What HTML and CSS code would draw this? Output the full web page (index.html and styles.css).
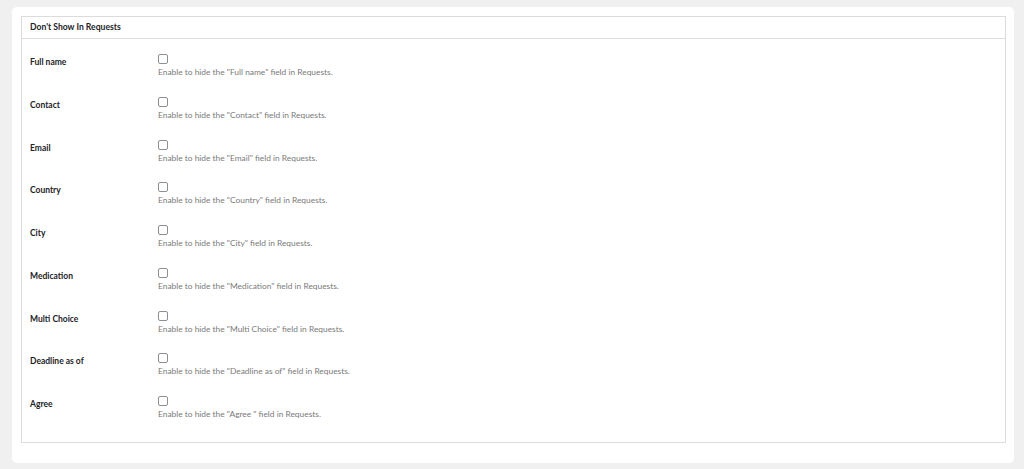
FILE: index.html
```html
<!DOCTYPE html>
<html lang="en">
<head>
  <meta charset="UTF-8" />
  <title>Don't Show In Requests</title>
  <link rel="stylesheet" href="styles.css">
</head>
<body>
  <div class="card">
    <div class="box">
      <div class="box-head">Don't Show In Requests</div>
      <div class="box-body">
        <div class="row">
          <div class="label">Full name</div>
          <div class="field"><span class="check"></span><p class="desc">Enable to hide the "Full name" field in Requests.</p></div>
        </div>
        <div class="row">
          <div class="label">Contact</div>
          <div class="field"><span class="check"></span><p class="desc">Enable to hide the "Contact" field in Requests.</p></div>
        </div>
        <div class="row">
          <div class="label">Email</div>
          <div class="field"><span class="check"></span><p class="desc">Enable to hide the "Email" field in Requests.</p></div>
        </div>
        <div class="row">
          <div class="label">Country</div>
          <div class="field"><span class="check"></span><p class="desc">Enable to hide the "Country" field in Requests.</p></div>
        </div>
        <div class="row">
          <div class="label">City</div>
          <div class="field"><span class="check"></span><p class="desc">Enable to hide the "City" field in Requests.</p></div>
        </div>
        <div class="row">
          <div class="label">Medication</div>
          <div class="field"><span class="check"></span><p class="desc">Enable to hide the "Medication" field in Requests.</p></div>
        </div>
        <div class="row">
          <div class="label">Multi Choice</div>
          <div class="field"><span class="check"></span><p class="desc">Enable to hide the "Multi Choice" field in Requests.</p></div>
        </div>
        <div class="row">
          <div class="label">Deadline as of</div>
          <div class="field"><span class="check"></span><p class="desc">Enable to hide the "Deadline as of" field in Requests.</p></div>
        </div>
        <div class="row">
          <div class="label">Agree</div>
          <div class="field"><span class="check"></span><p class="desc">Enable to hide the "Agree " field in Requests.</p></div>
        </div>
      </div>
    </div>
  </div>
</body>
</html>
```

FILE: styles.css
```css
body {
  margin: 0;
  padding: 7px 10px 6px 12px;
  background: #f0f0f1;
  font-family: Lato, "Open Sans", sans-serif;
  color: #1d2327;
}
.card {
  background: #fff;
  border-radius: 5px;
  padding: 9px 8px 20px 9px;
}
.box {
  border: 1px solid #dcdcde;
}
.box-head {
  height: 21px;
  line-height: 21px;
  padding: 0 8px;
  font-size: 8.6px;
  font-weight: 700;
  border-bottom: 1px solid #dcdcde;
}
.box-body {
  padding: 6px 0 12px;
}
.row {
  display: flex;
  padding: 9px 0 9.75px;
}
.label {
  width: 128px;
  padding: 2px 0 0 8px;
  font-size: 8.5px;
  font-weight: 700;
  line-height: 12px;
}
.field {
  display: flex;
  flex-direction: column;
  align-items: flex-start;
}
.check {
  display: block;
  box-sizing: border-box;
  width: 10px;
  height: 10px;
  border: 1px solid #8c8f94;
  border-radius: 2px;
  margin-bottom: 2px;
}
.desc {
  margin: 0;
  font-size: 8.4px;
  line-height: 12px;
  color: #7a7a7a;
}
```
